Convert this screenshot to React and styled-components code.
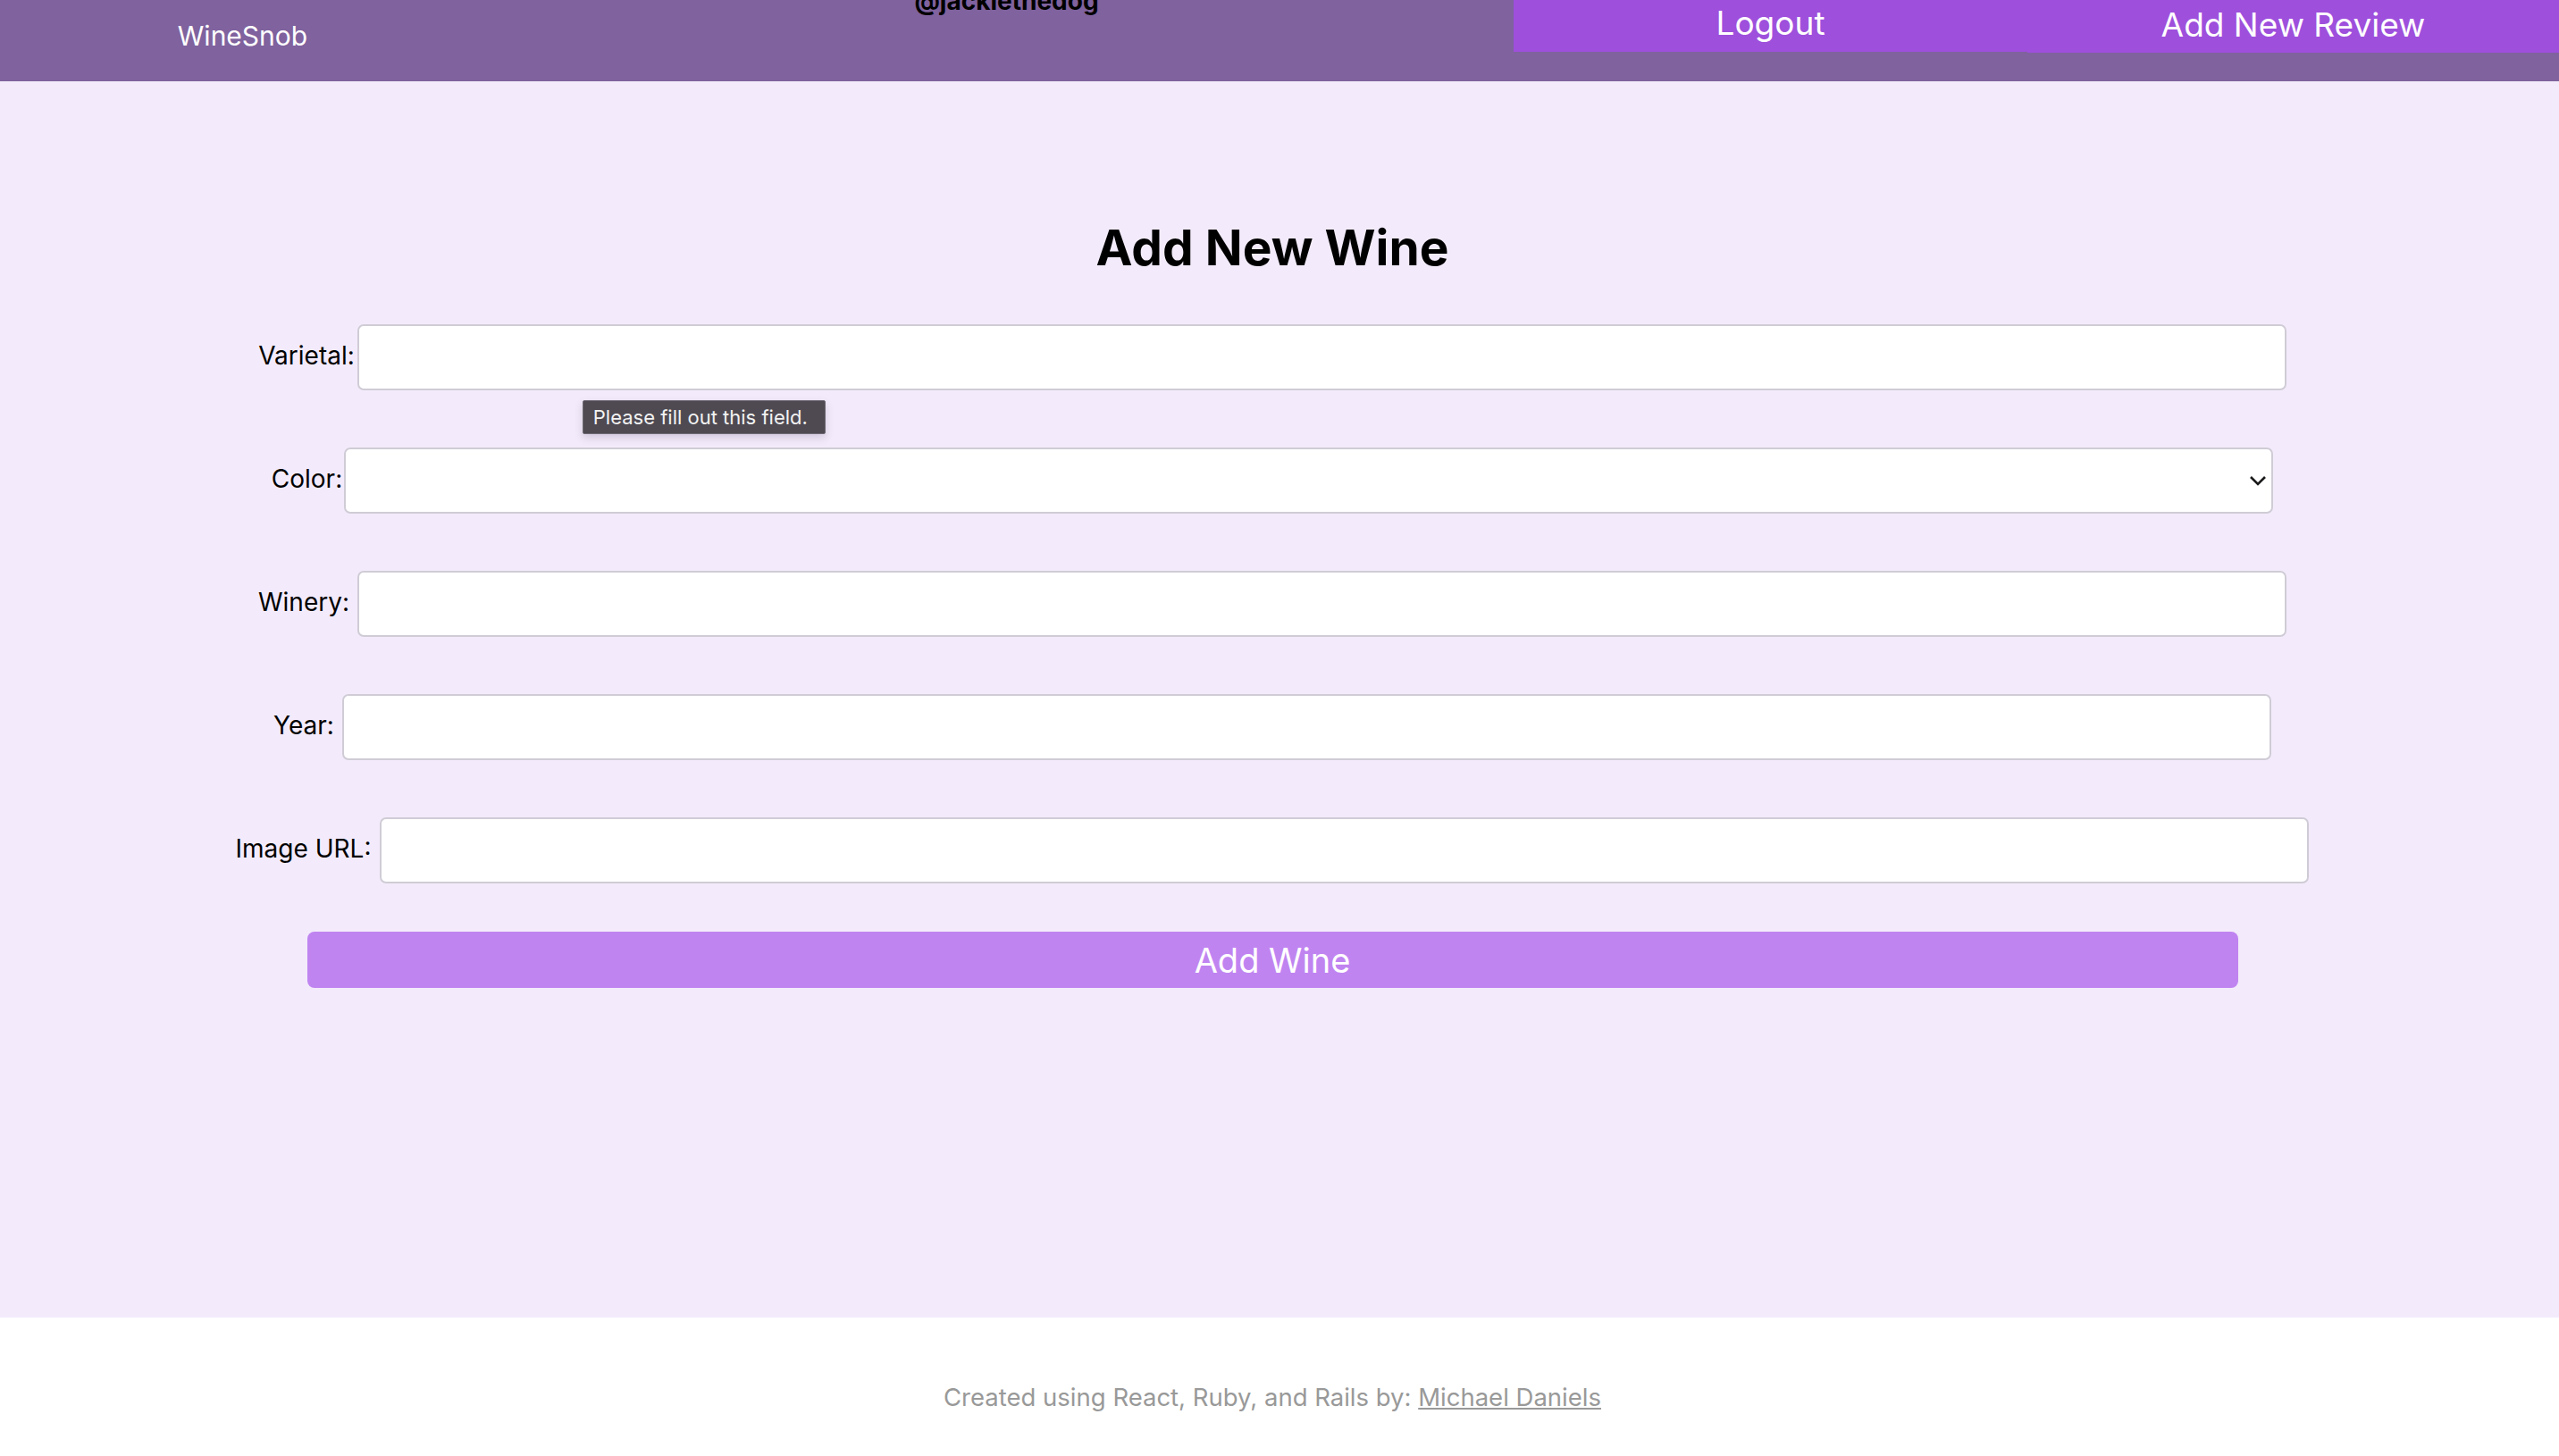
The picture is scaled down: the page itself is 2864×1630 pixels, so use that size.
import React from "react";
import styled, { createGlobalStyle } from "styled-components";

const Global = createGlobalStyle`
  html, body { margin: 0; padding: 0; background: #ffffff; }
  body { font-family: Inter, "Noto Sans", "Liberation Sans", sans-serif; }
  * { box-sizing: border-box; }
`;

const Page = styled.div`
  width: 2864px;
  min-height: 1630px;
  display: flex;
  flex-direction: column;
`;

const Header = styled.header`
  height: 91px;
  background: #7f629e;
  display: flex;
  align-items: flex-start;
  overflow: hidden;
`;

const Brand = styled.div`
  width: 543px;
  padding-top: 25px;
  text-align: center;
  font-size: 30px;
  line-height: 1;
  color: #ffffff;
`;

const User = styled.div`
  width: 1151px;
  padding-left: 16px;
  margin-top: -13px;
  text-align: center;
  font-size: 28px;
  font-weight: 700;
  line-height: 1;
  color: #000000;
`;

const NavButton = styled.div`
  width: ${(p) => p.$w};
  flex: ${(p) => (p.$grow ? "1" : "none")};
  height: ${(p) => p.$h}px;
  padding-top: ${(p) => p.$pt}px;
  background: #9e4fdc;
  color: #ffffff;
  font-size: 37px;
  line-height: 1;
  text-align: center;
`;

const Main = styled.main`
  height: 1384px;
  background: #f3ebfb;
  padding: 159px 16px 0 0;
  display: flex;
  flex-direction: column;
  align-items: center;
`;

const Title = styled.h1`
  margin: 0 0 58px;
  font-size: 55px;
  line-height: 1;
  font-weight: 700;
  color: #000000;
`;

const Row = styled.div`
  height: 74px;
  margin-bottom: ${(p) => p.$mb ?? 64}px;
  display: flex;
  align-items: center;
  justify-content: center;
  gap: ${(p) => p.$gap}px;
  width: 100%;
`;

const Label = styled.label`
  font-size: 28px;
  color: #000000;
  white-space: nowrap;
  margin-top: -4px;
`;

const Field = styled.div`
  position: relative;
  width: 2159px;
  height: 74px;
`;

const TextInput = styled.input`
  width: 100%;
  height: 100%;
  border: 2px solid #d0ccd6;
  border-radius: 7px;
  background: #ffffff;
  outline: none;
  font-size: 29px;
  padding: 0 16px;
`;

const Select = styled.select`
  width: 100%;
  height: 100%;
  appearance: none;
  -webkit-appearance: none;
  border: 2px solid #d0ccd6;
  border-radius: 7px;
  background: #ffffff;
  outline: none;
  font-size: 29px;
  padding: 0 16px;
`;

const Chevron = styled.svg`
  position: absolute;
  right: 7px;
  top: 50%;
  transform: translateY(-50%);
  pointer-events: none;
`;

const Tooltip = styled.div`
  position: absolute;
  left: 252px;
  top: 85px;
  width: 272px;
  height: 38px;
  background: #4f4a52;
  border: 1px solid #6e6a74;
  border-radius: 2px;
  color: #f2f2f2;
  font-size: 22px;
  line-height: 36px;
  padding-left: 11px;
  white-space: nowrap;
  box-shadow: 0 4px 10px rgba(60, 40, 80, 0.18);
  z-index: 2;
`;

const SubmitButton = styled.button`
  width: 2161px;
  height: 63px;
  margin-top: -10px;
  border: none;
  border-radius: 8px;
  background: #c084f1;
  color: #ffffff;
  font-family: inherit;
  font-size: 38px;
  line-height: 1;
  padding: 0;
  cursor: pointer;
`;

const Footer = styled.footer`
  flex: 1;
  background: #ffffff;
  padding: 76px 16px 0 0;
  text-align: center;
  font-size: 27.5px;
  line-height: 1;
  color: #999999;
`;

const FooterLink = styled.a`
  color: #999999;
  text-decoration: underline;
`;

function TextRow({ label, gap, mb, children }) {
  return (
    <Row $gap={gap} $mb={mb}>
      <Label>{label}</Label>
      {children}
    </Row>
  );
}

export default function App() {
  return (
    <Page>
      <Global />
      <Header>
        <Brand>WineSnob</Brand>
        <User>@jackiethedog</User>
        <NavButton $w="575px" $h={58} $pt={7}>Logout</NavButton>
        <NavButton $grow $w="auto" $h={59} $pt={9}>Add New Review</NavButton>
      </Header>
      <Main>
        <Title>Add New Wine</Title>
        <TextRow label="Varietal:" gap={3}>
          <Field>
            <TextInput type="text" />
            <Tooltip>Please fill out this field.</Tooltip>
          </Field>
        </TextRow>
        <TextRow label="Color:" gap={2}>
          <Field>
            <Select defaultValue="">
              <option value=""></option>
              <option value="red">Red</option>
              <option value="white">White</option>
              <option value="rose">Rosé</option>
            </Select>
            <Chevron width="20" height="12" viewBox="0 0 20 12">
              <path d="M2 2 L10 10 L18 2" fill="none" stroke="#1a1a1a" strokeWidth="2.6" />
            </Chevron>
          </Field>
        </TextRow>
        <TextRow label="Winery:" gap={9}>
          <Field>
            <TextInput type="text" />
          </Field>
        </TextRow>
        <TextRow label="Year:" gap={9}>
          <Field>
            <TextInput type="text" />
          </Field>
        </TextRow>
        <TextRow label="Image URL:" gap={10} mb={64}>
          <Field>
            <TextInput type="text" />
          </Field>
        </TextRow>
        <SubmitButton type="button">Add Wine</SubmitButton>
      </Main>
      <Footer>
        Created using React, Ruby, and Rails by: <FooterLink href="#">Michael Daniels</FooterLink>
      </Footer>
    </Page>
  );
}
